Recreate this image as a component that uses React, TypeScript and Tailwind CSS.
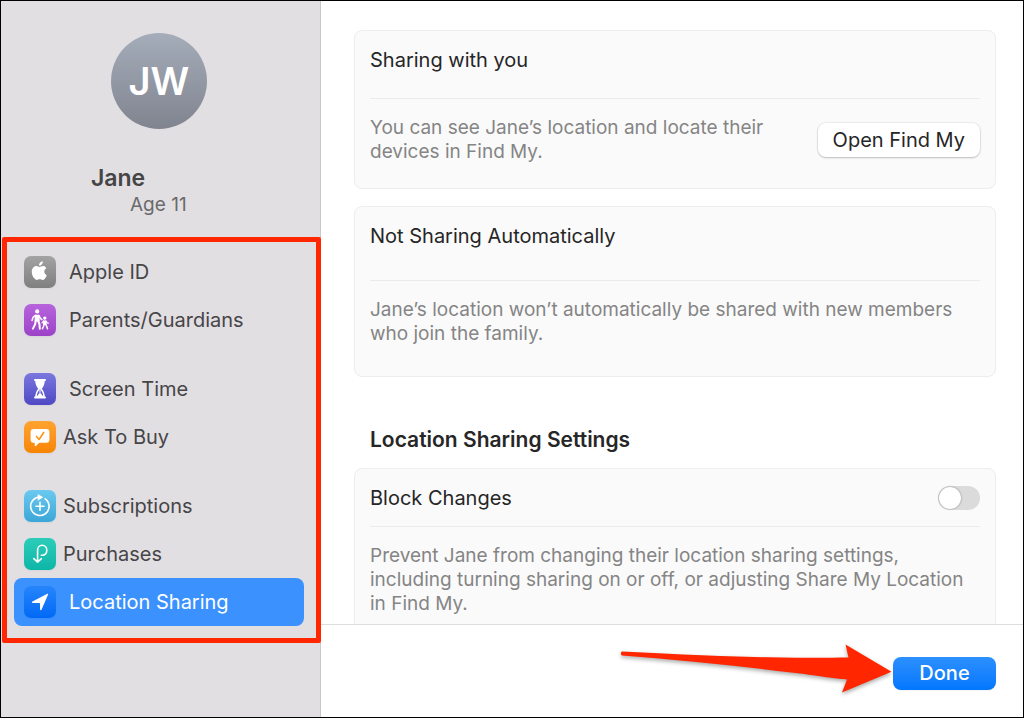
import { ReactNode, useState } from 'react'
import { clsx } from 'clsx'

interface Item {
  id: string
  label: string
  tile: string
  wide: boolean
  icon: ReactNode
}

const GROUPS: Item[][] = [
  [
    {
      id: 'apple-id',
      label: 'Apple ID',
      tile: 'from-[#a3a3a3] to-[#7f7f7f]',
      wide: true,
      icon: (
        <g fill="#fff">
          <path d="M18.800 5.200c.1 1.300-.4 2.400-1.100 3.200-.7.800-1.700 1.300-2.700 1.200-.1-1.200.4-2.300 1.100-3.100.7-.7 1.800-1.200 2.700-1.300z" />
          <path d="M22.300 12.300c-1.300.8-2 1.900-2 3.300 0 1.700 1 3 2.500 3.600-.5 1.400-1.200 2.600-2 3.500-.7.800-1.300 1.200-2.200 1.200-1 0-1.500-.6-2.900-.6s-1.900.6-2.900.6c-.9 0-1.600-.5-2.300-1.300-1.700-2-2.700-4.200-2.700-6.700 0-3.300 2.100-5.800 4.400-5.800 1.300 0 2.400.8 3.300.8.800 0 2.100-.9 3.600-.9 1.200 0 2.400.6 3.200 2.300z" />
        </g>
      ),
    },
    {
      id: 'parents',
      label: 'Parents/Guardians',
      tile: 'from-[#b763dc] to-[#9c42c8]',
      wide: true,
      icon: (
        <g fill="none" stroke="#fff" strokeLinecap="round" strokeLinejoin="round">
          <circle cx="13.200" cy="7.400" r="2.100" fill="#fff" stroke="none" />
          <path d="M11.500 11.300h3.400l.2 5.700h-4z" fill="#fff" strokeWidth="1.200" />
          <path d="M11.400 11.400l-2.400 2-1 3M15 11.600l1.600 3 1.400 1" strokeWidth="1.500" />
          <path d="M11.700 17l-.6 3.400-2.200 4.200M14.300 17l1.200 3.400.3 4.400" strokeWidth="2" />
          <circle cx="20.800" cy="14.100" r="1.700" fill="#fff" stroke="none" />
          <path d="M19.900 17h1.900l.3 3.300h-2.500z" fill="#fff" strokeWidth="1.200" />
          <path d="M19.700 17l-1.700 1.800M22 17l1.200 1.900 1.200.3" strokeWidth="1.200" />
          <path d="M19.900 20.500l-.4 2-1.100 2.300M21.700 20.500l1 1.900.8 2.400" strokeWidth="1.500" />
        </g>
      ),
    },
  ],
  [
    {
      id: 'screen-time',
      label: 'Screen Time',
      tile: 'from-[#7b76df] to-[#5049c4]',
      wide: true,
      icon: (
        <g stroke="#fff" strokeLinecap="round" strokeLinejoin="round">
          <path d="M11 7h10M11 24.500h10" fill="none" strokeWidth="2" />
          <path
            d="M12 7.500c0 4 .6 5.400 3.100 8.200C12.600 18.500 12 20 12 24h8c0-4-.6-5.500-3.100-8.300C19.400 12.900 20 11.500 20 7.500z"
            fill="none"
            strokeWidth="1.500"
          />
          <path d="M12.500 11h7c-.4 1.500-1.500 3-3.500 4.800-2-1.800-3.100-3.300-3.500-4.800z" fill="#fff" stroke="none" />
          <path d="M12 7.500h8V11h-8z" fill="#fff" stroke="none" />
          <path d="M16 15v4.500" fill="none" strokeWidth="1" />
          <path d="M13 24c.3-1.800 1.500-3 3-4.300 1.500 1.300 2.700 2.500 3 4.300z" fill="#fff" stroke="none" />
        </g>
      ),
    },
    {
      id: 'ask-to-buy',
      label: 'Ask To Buy',
      tile: 'from-[#fea42f] to-[#f78500]',
      wide: false,
      icon: (
        <g>
          <path
            d="M9.600 8h12.800a3 3 0 0 1 3 3v7.700a3 3 0 0 1-3 3h-7.100l-3.500 3.200c-.5.5-1.100.2-1.100-.5v-2.700H9.600a3 3 0 0 1-3-3V11a3 3 0 0 1 3-3z"
            fill="#fff"
          />
          <path d="M12.500 15.400l2.600 3.100 4.600-7" fill="none" stroke="#f99518" strokeWidth="1.600" strokeLinecap="round" strokeLinejoin="round" />
        </g>
      ),
    },
  ],
  [
    {
      id: 'subscriptions',
      label: 'Subscriptions',
      tile: 'from-[#6bc9ef] to-[#3aa7d8]',
      wide: false,
      icon: (
        <g fill="none" stroke="#fff" strokeWidth="1.600" strokeLinecap="round">
          <path d="M21.200 8.800a9.200 9.200 0 1 1-5.200-1.700" />
          <path d="M14.200 4.600l4.600 2.700-4.600 2.900z" fill="#fff" strokeWidth=".5" strokeLinejoin="round" />
          <path d="M16 12.200v8M12 16.200h8" />
        </g>
      ),
    },
    {
      id: 'purchases',
      label: 'Purchases',
      tile: 'from-[#2bccb9] to-[#0bb6a7]',
      wide: false,
      icon: (
        <path
          d="M17.300 17.200h1c2.600 0 4.500-2 4.500-4.900s-1.900-5-4.600-5-4.600 2.100-4.600 5v11.900M9.800 20.600l3.800 3.600 3.800-3.600"
          fill="none"
          stroke="#fff"
          strokeWidth="1.600"
          strokeLinecap="round"
          strokeLinejoin="round"
        />
      ),
    },
    {
      id: 'location',
      label: 'Location Sharing',
      tile: 'from-[#2585fb] to-[#0069f5]',
      wide: true,
      icon: <path d="M23.400 7.800c.6-.3 1 .1.700.7l-6.600 15.300c-.4.800-1.400.6-1.400-.3l-.1-5.900a.6.6 0 0 0-.6-.6l-6.700-.1c-.9 0-1.100-1-.3-1.400z" fill="#fff" />,
    },
  ],
]

const cardClass = 'border border-[#ededed] bg-[#fafafa] px-[15px]'
const titleClass = 'text-[20px] leading-7 text-[#262626]'
const descClass = 'text-[19px] leading-6 text-[#858585]'

function Sidebar() {
  const [selected, setSelected] = useState('location')

  return (
    <aside className="w-80 shrink-0 border-r border-[#c9c7ca] bg-[#e2dfe3] pt-8">
      <div className="ml-[110px] flex size-24 items-center justify-center rounded-full bg-linear-to-b from-[#a5adba] to-[#80848f] text-[38px] font-semibold text-white">
        JW
      </div>
      <h1 className="mt-[35px] pl-[90px] text-[23px] leading-7 font-semibold text-[#454545]">Jane</h1>
      <p className="mt-px pl-[129px] text-[19px] leading-6 text-[#6b6a6c]">Age 11</p>

      <div className="relative mt-5 pt-[11px] pr-4 pb-[17px] pl-[13px]">
        <nav className="flex flex-col gap-[21px]">
          {GROUPS.map((group) => (
            <ul key={group[0].id}>
              {group.map((item) => (
                <li key={item.id}>
                  <a
                    href={`#${item.id}`}
                    onClick={() => setSelected(item.id)}
                    className={clsx(
                      'flex h-12 items-center rounded-lg pl-[10px] text-[20px]',
                      item.wide ? 'gap-[13px]' : 'gap-[7px]',
                      selected === item.id ? 'bg-[#3b92ff] text-white' : 'text-[#464547]',
                    )}
                  >
                    <span className={clsx('size-8 rounded-[7px] bg-linear-to-b shadow-xs', item.tile)}>
                      <svg viewBox="0 0 32 32" className="size-8" aria-hidden="true">{item.icon}</svg>
                    </span>
                    {item.label}
                  </a>
                </li>
              ))}
            </ul>
          ))}
        </nav>
        <div className="pointer-events-none absolute inset-y-0 -right-px left-px rounded-xs border-5 border-[#ff2600]" />
      </div>
    </aside>
  )
}

export default function App() {
  const [blockChanges, setBlockChanges] = useState(false)

  return (
    <div className="flex h-screen overflow-hidden border border-black bg-white font-['Inter','Liberation_Sans',sans-serif]">
      <Sidebar />

      <div className="flex min-w-0 flex-1 flex-col">
        <main className="min-h-0 flex-1 overflow-hidden pt-[29px] pr-[27px] pl-[33px]">
          <section className={`${cardClass} rounded-lg`}>
            <h2 className={`${titleClass} pt-[15px] pb-6`}>Sharing with you</h2>
            <div className="flex items-center justify-between gap-4 border-t border-[#ebebeb] pt-[17px] pb-6">
              <p className={`${descClass} max-w-[410px]`}>You can see Jane’s location and locate their devices in Find My.</p>
              <button className="h-[34px] shrink-0 rounded-lg bg-white px-[15px] text-[20px] text-[#262626] shadow-[0_0_1px_1px_rgba(0,0,0,0.06),0_1px_2px_rgba(0,0,0,0.2)]">
                Open Find My
              </button>
            </div>
          </section>

          <section className={`${cardClass} mt-[17px] rounded-lg`}>
            <h2 className={`${titleClass} pt-[15px] pb-[30px]`}>Not Sharing Automatically</h2>
            <p className={`${descClass} border-t border-[#ebebeb] pt-[17px] pb-[30px]`}>
              Jane’s location won’t automatically be shared with new members who join the family.
            </p>
          </section>

          <h2 className="mt-[49px] mb-[14px] pl-4 text-[21px] leading-7 font-semibold text-[#262626]">Location Sharing Settings</h2>

          <section className={`${cardClass} rounded-t-lg`}>
            <div className="flex items-center justify-between pt-[15px] pb-[14px]">
              <label htmlFor="block-changes" className={titleClass}>Block Changes</label>
              <input
                id="block-changes"
                type="checkbox"
                role="switch"
                checked={blockChanges}
                onChange={(e) => setBlockChanges(e.target.checked)}
                className="flex h-6 w-[42px] appearance-none items-center rounded-full bg-[#dcdbdc] p-px before:size-[22px] before:rounded-full before:bg-white before:shadow-[0_0_2px_rgba(0,0,0,0.45)] checked:justify-end checked:bg-[#0a7aff]"
              />
            </div>
            <p className={`${descClass} border-t border-[#ebebeb] pt-[17px] pb-8`}>
              Prevent Jane from changing their location sharing settings, including turning sharing on or off, or adjusting Share My Location in Find My.
            </p>
          </section>
        </main>

        <footer className="relative flex h-[93px] shrink-0 items-center justify-end border-t border-[#dedede] pt-1 pr-[27px]">
          <svg
            width="276"
            height="56"
            viewBox="0 0 276 56"
            className="pointer-events-none absolute top-[17px] right-[127px] drop-shadow-[0_2px_2px_rgba(0,0,0,0.35)]"
            aria-hidden="true"
          >
            <path
              d="M2 9.500C80 13.500 140 16 195 15.800C208 15.800 218 15.800 228.500 15.600L225.500 2.500L271.500 29.800L222 50.500L227 37.600C218 37 205 35 180 31.600C120 24 60 18 2 13.500C.6 12.800.6 10 2 9.500Z"
              fill="#ff2600"
            />
          </svg>
          <button className="h-[33px] w-[103px] rounded-lg bg-linear-to-b from-[#2b90ff] to-[#0077fd] text-[20px] font-medium text-white shadow-xs">
            Done
          </button>
        </footer>
      </div>
    </div>
  )
}
